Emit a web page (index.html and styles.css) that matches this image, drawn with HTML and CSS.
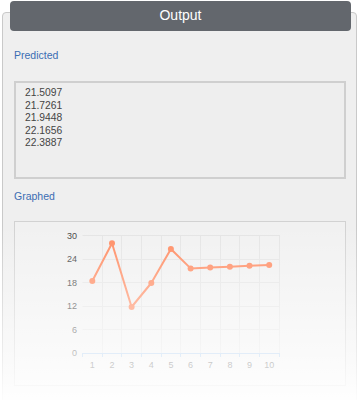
FILE: index.html
```html
<!DOCTYPE html>
<html lang="en">
<head>
    <meta charset="UTF-8">
    <meta name="viewport" content="width=device-width, initial-scale=1.0">
    <title>Output</title>
    <link rel="stylesheet" href="styles.css">
</head>
<body>
    <div class="panel">
        <div class="panel-title">Output</div>
        <div class="panel-body">
            <div class="section-label">Predicted</div>
            <div class="result-box">
                <div>21.5097</div>
                <div>21.7261</div>
                <div>21.9448</div>
                <div>22.1656</div>
                <div>22.3887</div>
            </div>

            <div class="section-label">Graphed</div>
            <div class="chart-box">
                <svg class="chart" width="330" height="163" viewBox="0 0 330 163">
                    <defs>
                        <linearGradient id="axis-fade" x1="0" y1="0" x2="0" y2="1">
                            <stop offset="0" stop-color="#4a8fd6"/>
                            <stop offset="1" stop-color="#9cc3ea"/>
                        </linearGradient>
                    </defs>
                    <!-- grid -->
                    <g stroke="#e4e4e4" stroke-width="1">
                        <line x1="67.5" y1="13.5" x2="264.5" y2="13.5"/>
                        <line x1="67.5" y1="37.5" x2="264.5" y2="37.5"/>
                        <line x1="67.5" y1="60.5" x2="264.5" y2="60.5"/>
                        <line x1="67.5" y1="84.5" x2="264.5" y2="84.5"/>
                        <line x1="67.5" y1="107.5" x2="264.5" y2="107.5"/>
                        <line x1="87.5" y1="13" x2="87.5" y2="131"/>
                        <line x1="106.5" y1="13" x2="106.5" y2="131"/>
                        <line x1="126.5" y1="13" x2="126.5" y2="131"/>
                        <line x1="146.5" y1="13" x2="146.5" y2="131"/>
                        <line x1="165.5" y1="13" x2="165.5" y2="131"/>
                        <line x1="185.5" y1="13" x2="185.5" y2="131"/>
                        <line x1="205.5" y1="13" x2="205.5" y2="131"/>
                        <line x1="224.5" y1="13" x2="224.5" y2="131"/>
                        <line x1="244.5" y1="13" x2="244.5" y2="131"/>
                        <line x1="264.5" y1="13" x2="264.5" y2="131"/>
                    </g>
                    <!-- axes -->
                    <line x1="67.5" y1="13" x2="67.5" y2="131.5" stroke="url(#axis-fade)" stroke-width="2"/>
                    <g stroke="#a9cbec" stroke-width="1">
                        <line x1="67" y1="131.5" x2="265" y2="131.5"/>
                        <line x1="67.5" y1="131" x2="67.5" y2="135"/>
                        <line x1="87.5" y1="131" x2="87.5" y2="135"/>
                        <line x1="106.5" y1="131" x2="106.5" y2="135"/>
                        <line x1="126.5" y1="131" x2="126.5" y2="135"/>
                        <line x1="146.5" y1="131" x2="146.5" y2="135"/>
                        <line x1="165.5" y1="131" x2="165.5" y2="135"/>
                        <line x1="185.5" y1="131" x2="185.5" y2="135"/>
                        <line x1="205.5" y1="131" x2="205.5" y2="135"/>
                        <line x1="224.5" y1="131" x2="224.5" y2="135"/>
                        <line x1="244.5" y1="131" x2="244.5" y2="135"/>
                        <line x1="264.5" y1="131" x2="264.5" y2="135"/>
                    </g>
                    <!-- y labels -->
                    <g class="tick-text" text-anchor="end">
                        <text x="62" y="16.5">30</text>
                        <text x="62" y="40">24</text>
                        <text x="62" y="63.5">18</text>
                        <text x="62" y="87">12</text>
                        <text x="62" y="110.5">6</text>
                        <text x="62" y="134">0</text>
                    </g>
                    <!-- x labels -->
                    <g class="tick-text" text-anchor="middle">
                        <text x="77.3" y="146">1</text>
                        <text x="97" y="146">2</text>
                        <text x="116.6" y="146">3</text>
                        <text x="136.3" y="146">4</text>
                        <text x="155.9" y="146">5</text>
                        <text x="175.6" y="146">6</text>
                        <text x="195.2" y="146">7</text>
                        <text x="214.9" y="146">8</text>
                        <text x="234.5" y="146">9</text>
                        <text x="254.2" y="146">10</text>
                    </g>
                    <!-- series -->
                    <polyline fill="none" stroke="#ff8a60" stroke-width="2" stroke-linejoin="round"
                        points="77.3,59 97,21.3 116.6,85 136.3,61 155.9,27 175.6,46.4 195.2,45.5 214.9,44.7 234.5,43.8 254.2,42.9"/>
                    <g fill="#ff8a60">
                        <circle cx="77.3" cy="59" r="3"/>
                        <circle cx="97" cy="21.3" r="3"/>
                        <circle cx="116.6" cy="85" r="3"/>
                        <circle cx="136.3" cy="61" r="3"/>
                        <circle cx="155.9" cy="27" r="3"/>
                        <circle cx="175.6" cy="46.4" r="3"/>
                        <circle cx="195.2" cy="45.5" r="3"/>
                        <circle cx="214.9" cy="44.7" r="3"/>
                        <circle cx="234.5" cy="43.8" r="3"/>
                        <circle cx="254.2" cy="42.9" r="3"/>
                    </g>
                </svg>
            </div>
        </div>
    </div>
</body>
</html>
```

FILE: styles.css
```css
body {
    font-family: "Liberation Sans", Arial, sans-serif;
    margin: 0;
    padding: 0;
    background-color: #fff;
}
.panel {
    position: relative;
    margin: 12px 2px 0 2px;
    border: 1px solid #c9c9c9;
    border-radius: 4px;
    background-color: #efefef;
}
.panel::after {
    content: "";
    position: absolute;
    top: 212px;
    left: -2px;
    right: -2px;
    bottom: -2px;
    background: linear-gradient(rgba(255,255,255,0), rgba(255,255,255,0.72) 140px, rgba(255,255,255,0.95) 175px, #fff 190px);
}
.panel-title {
    margin: -12px 5px 0 7px;
    height: 30px;
    line-height: 29px;
    border-radius: 4px;
    background-color: #63676d;
    color: #fff;
    font-size: 14px;
    text-align: center;
}
.panel-body {
    padding: 17px 10px 40px 11px;
}
.section-label {
    font-size: 10.5px;
    line-height: 14px;
    color: #3b6db3;
}
.result-box {
    margin: 19px 0 10px 0;
    height: 90px;
    padding: 4px 9px 0 9px;
    border: 2px solid #cfcfcf;
    background-color: #eeeeee;
    color: #444;
    font-size: 10.3px;
    line-height: 12.5px;
}
.chart-box {
    margin-top: 18px;
    height: 163px;
    border: 1px solid #d2d2d2;
    background-color: #f1f1f1;
}
.chart {
    display: block;
}
.tick-text {
    font-family: "Liberation Sans", Arial, sans-serif;
    font-size: 9px;
    fill: #444;
}
```
